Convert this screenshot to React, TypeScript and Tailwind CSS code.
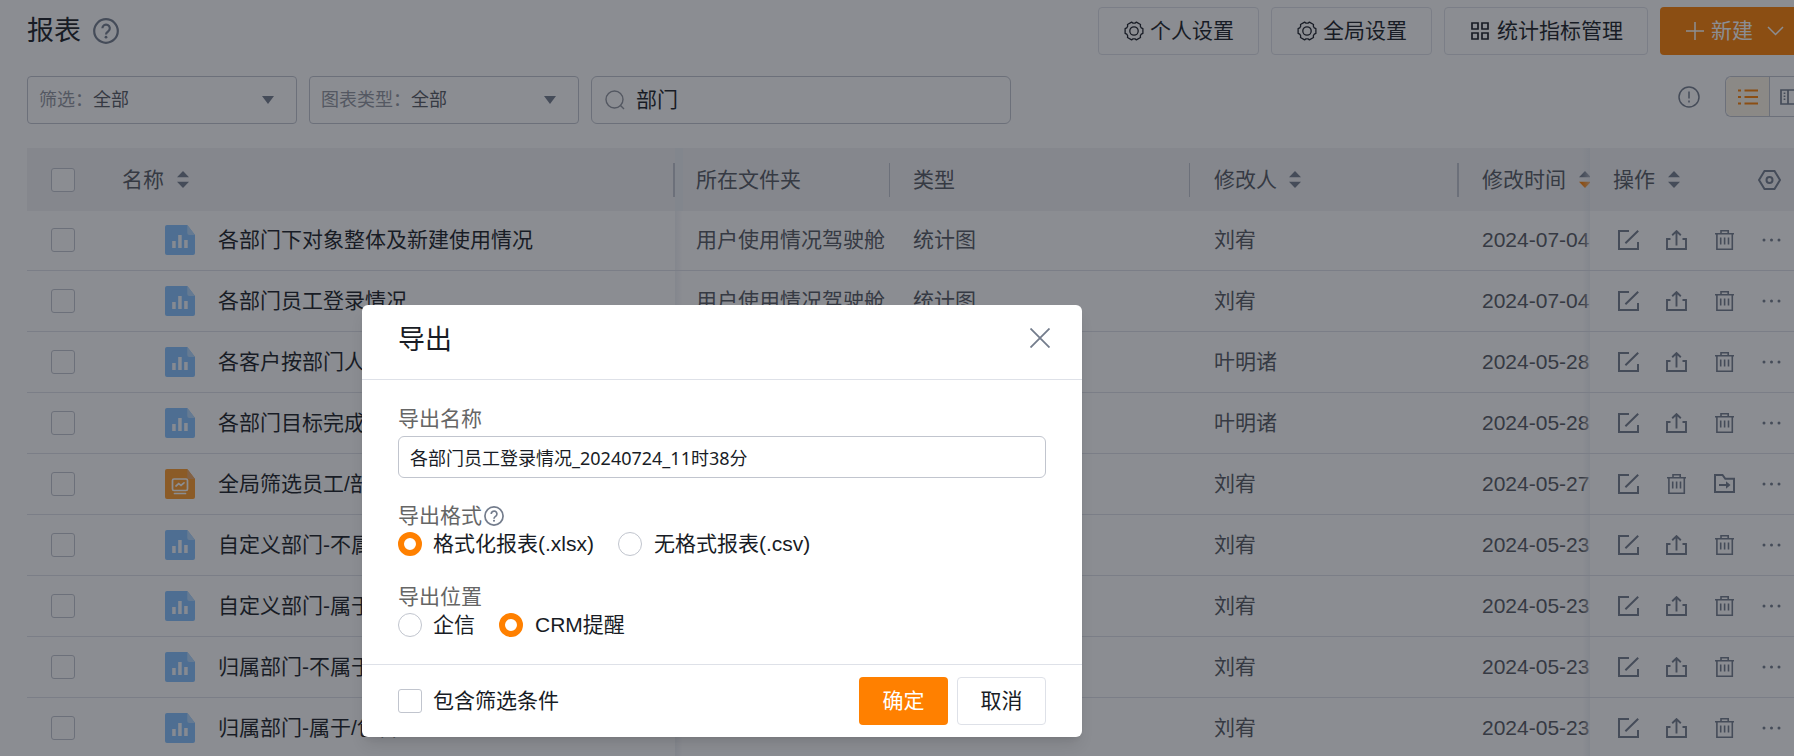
import React, { useState } from 'react';

type Kind = 'chart' | 'board';

interface Report {
    id: number;
    kind: Kind;
    name: string;
    folder: string;
    type: string;
    editor: string;
    date: string;
}

const reports: Report[] = [
    { id: 1, kind: 'chart', name: '各部门下对象整体及新建使用情况', folder: '用户使用情况驾驶舱', type: '统计图', editor: '刘宥', date: '2024-07-04' },
    { id: 2, kind: 'chart', name: '各部门员工登录情况', folder: '用户使用情况驾驶舱', type: '统计图', editor: '刘宥', date: '2024-07-04' },
    { id: 3, kind: 'chart', name: '各客户按部门人员', folder: '', type: '', editor: '叶明诸', date: '2024-05-28' },
    { id: 4, kind: 'chart', name: '各部门目标完成情况', folder: '', type: '', editor: '叶明诸', date: '2024-05-28' },
    { id: 5, kind: 'board', name: '全局筛选员工/部门', folder: '', type: '', editor: '刘宥', date: '2024-05-27' },
    { id: 6, kind: 'chart', name: '自定义部门-不属于', folder: '', type: '', editor: '刘宥', date: '2024-05-23' },
    { id: 7, kind: 'chart', name: '自定义部门-属于', folder: '', type: '', editor: '刘宥', date: '2024-05-23' },
    { id: 8, kind: 'chart', name: '归属部门-不属于', folder: '', type: '', editor: '刘宥', date: '2024-05-23' },
    { id: 9, kind: 'chart', name: '归属部门-属于/包含', folder: '', type: '', editor: '刘宥', date: '2024-05-23' },
];

const checkboxClass = 'block size-6 shrink-0 appearance-none rounded-[3px] border border-[#c1c5ce] bg-white checked:border-[#ff8000] checked:bg-[#ff8000]';
const radioClass = 'size-6 shrink-0 appearance-none rounded-full border border-[#c1c5ce] bg-white checked:border-6 checked:border-[#ff8000]';

/* Iconos */
const HelpIcon: React.FC<{ className: string }> = ({ className }) => (
    <svg viewBox="0 0 26 26" className={className} fill="none" stroke="currentColor" strokeWidth="2.2">
        <circle cx="13" cy="13" r="11.800" />
        <path d="M9.400 10.300a3.700 3.700 0 1 1 6 2.900c-1.500 1.200-2.400 1.700-2.400 3.300" />
        <circle cx="13" cy="19.200" r="1.400" fill="currentColor" stroke="none" />
    </svg>
);

// seis dientes, dos puntos por diente y dos por hueco
const gearPoints = Array.from({ length: 24 }, (_, i) => {
    const tooth = Math.floor(i / 4) * 60;
    const step = i % 4;
    const angle = ((tooth + [-15, 15, 23, 37][step]) * Math.PI) / 180;
    const radius = step < 2 ? 9.2 : 7.9;
    return `${(10 + radius * Math.cos(angle)).toFixed(2)},${(10 + radius * Math.sin(angle)).toFixed(2)}`;
}).join(' ');

const GearIcon = () => (
    <svg width="20" height="20" viewBox="0 0 20 20" fill="none" stroke="currentColor" strokeWidth="1.3" strokeLinejoin="round">
        <polygon points={gearPoints} />
        <circle cx="10" cy="10" r="4.2" />
    </svg>
);

const EditIcon = () => (
    <svg width="21" height="20" viewBox="0 0 21 20" fill="none" stroke="currentColor" strokeWidth="2">
        <path d="M11 1H1v18h19v-7M20.200 .800 7.400 13.300" />
    </svg>
);

const ShareIcon = () => (
    <svg width="21" height="20" viewBox="0 0 21 20" fill="none" stroke="currentColor" strokeWidth="1.900">
        <path d="M4.500 9H1v10h19V9h-3.500M10.500 15.500V1.200M6.200 5.200l4.300-4.100 4.300 4.100" />
    </svg>
);

const TrashIcon = () => (
    <svg width="19" height="20" viewBox="0 0 19 20" fill="none" stroke="currentColor" strokeWidth="1.600">
        <path d="M0 3.700h19M6 3.700V.8h7.200v2.900M1.900 3.700v15.500h15.400V3.700M5.700 7.500v7M9.600 7.500v7M13.500 7.500v7" />
    </svg>
);

const MoveIcon = () => (
    <svg width="21" height="19" viewBox="0 0 21 19" fill="none" stroke="currentColor" strokeWidth="2">
        <path d="M1 1h7.500l2.800 3.800H20V18H1zM5 11h8" />
        <path d="M12 7.200 16.500 11 12 14.800z" fill="currentColor" stroke="none" />
    </svg>
);

const DotsIcon = () => (
    <svg width="20" height="4" viewBox="0 0 20 4" fill="currentColor">
        <circle cx="2" cy="2" r="1.500" />
        <circle cx="9.500" cy="2" r="1.500" />
        <circle cx="17" cy="2" r="1.500" />
    </svg>
);

const SortIcon: React.FC<{ desc?: boolean }> = ({ desc }) => (
    <svg width="12" height="17" viewBox="0 0 12 17" fill="currentColor" className="shrink-0 text-[#737c8c]">
        <path d="M6 0l6 6.200H0z" />
        <path d="M0 10.800h12L6 17z" fill={desc ? '#ff8000' : 'currentColor'} />
    </svg>
);

const FileIcon: React.FC<{ kind: Kind }> = ({ kind }) => (
    <svg width="30" height="30" viewBox="0 0 30 30" className="shrink-0">
        <path d="M2 0h20.300L30 10v18a2 2 0 0 1-2 2H2a2 2 0 0 1-2-2V2a2 2 0 0 1 2-2z" fill={kind === 'chart' ? '#85c1ff' : '#ff9b29'} />
        <path d="M22.300 0 30 10h-5.700a2 2 0 0 1-2-2z" fill={kind === 'chart' ? '#b3d9ff' : '#eda764'} />
        {kind === 'chart' ? (
            <path d="M7.200 16h3.500v7H7.200zM13.200 10h3.500v13h-3.500zM19.200 15h3.500v8h-3.500z" fill="#f4f9ff" />
        ) : (
            <g fill="none" stroke="#fff" strokeWidth="1.700" strokeLinecap="round">
                <rect x="7.500" y="10" width="15" height="11.500" rx="1.500" />
                <path d="M11 17l2.700-2.300 2.300 1.800 3-2.700M9.500 24.500h11" />
            </g>
        )}
    </svg>
);

const IconButton: React.FC<{ label: string; children: React.ReactNode }> = ({ label, children }) => (
    <button aria-label={label} className="flex size-6 items-center justify-center hover:text-[#ff8000]">
        {children}
    </button>
);

const FilterSelect: React.FC<{ label: string }> = ({ label }) => (
    <label className="relative flex h-12 w-[270px] items-center rounded border border-[#c1c5ce] pl-[11px] text-lg text-[#91959e]">
        {label}：
        <select className="flex-1 appearance-none bg-transparent text-[#545861] outline-none">
            <option>全部</option>
        </select>
        <svg width="12" height="8" viewBox="0 0 12 8" fill="#737c8c" className="pointer-events-none absolute right-[22px]">
            <path d="M0 0h12L6 8z" />
        </svg>
    </label>
);

const PageHeader = () => (
    <header className="flex items-center justify-between pl-[27px]">
        <div className="flex items-center gap-3">
            <h1 className="text-[27px] leading-9">报表</h1>
            <button aria-label="帮助" className="text-[#737c8c]">
                <HelpIcon className="size-[26px]" />
            </button>
        </div>
        <div className="flex gap-3 text-[21px]">
            {['个人设置', '全局设置'].map(text => (
                <button key={text} className="flex h-12 items-center gap-[6px] rounded border border-[#dee1e8] pr-6 pl-[25px]">
                    <GearIcon />
                    {text}
                </button>
            ))}
            <button className="flex h-12 items-center gap-2 rounded border border-[#dee1e8] pr-6 pl-[26px]">
                <svg width="18" height="18" viewBox="0 0 18 18" fill="none" stroke="currentColor" strokeWidth="1.700">
                    <path d="M1 1h6v6H1zM11 1h6v6h-6zM1 11h6v6H1zM11 11h6v6h-6z" />
                </svg>
                统计指标管理
            </button>
            <button className="flex h-12 items-center rounded-l bg-[#ff8000] pr-[10px] pl-[26px] text-white">
                <svg width="18" height="18" viewBox="0 0 18 18" stroke="currentColor" strokeWidth="1.500">
                    <path d="M9 0v18M0 9h18" />
                </svg>
                <span className="mr-[14px] ml-[7px]">新建</span>
                <svg width="17" height="10" viewBox="0 0 17 10" fill="none" stroke="currentColor" strokeWidth="1.500">
                    <path d="M1 1l7.500 7.500L16 1" />
                </svg>
            </button>
        </div>
    </header>
);

const Toolbar = () => (
    <div className="mt-[21px] flex items-start gap-3 pl-[27px]">
        <FilterSelect label="筛选" />
        <FilterSelect label="图表类型" />
        <label className="flex h-12 w-[420px] items-center gap-[11px] rounded-md border border-[#c1c5ce] px-[13px]">
            <svg width="20" height="20" viewBox="0 0 20 20" fill="none" stroke="#91959e" strokeWidth="1.400" className="shrink-0">
                <circle cx="9.500" cy="9.500" r="8.500" />
                <path d="M15 15l4 4" />
            </svg>
            <input aria-label="搜索" defaultValue="部门" className="min-w-0 flex-1 bg-transparent text-[21px] outline-none" />
        </label>
        <div className="ml-auto flex items-center gap-[25px]">
            <button aria-label="提示" className="text-[#737c8c]">
                <svg width="22" height="22" viewBox="0 0 22 22" fill="none" stroke="currentColor" strokeWidth="1.500">
                    <circle cx="11" cy="11" r="10" />
                    <path d="M11 5.500v7M11 14.500v2" />
                </svg>
            </button>
            <div className="flex h-[41px] rounded-l-md border border-r-0 border-[#c1c5ce]">
                <button aria-label="列表" className="flex w-[43px] items-center justify-center rounded-l-md bg-[#fff7e6] text-[#ff8000]">
                    <svg width="20" height="16" viewBox="0 0 20 16" fill="none" stroke="currentColor" strokeWidth="1.800">
                        <path d="M0 1.500h3M6.500 1.500H20M0 8h3M6.500 8H20M0 14.500h3M6.500 14.500H20" />
                    </svg>
                </button>
                <button aria-label="分栏" className="flex w-[25px] items-center justify-end overflow-hidden border-l border-[#c1c5ce] text-[#737c8c]">
                    <svg width="14" height="16" viewBox="0 0 14 16" fill="none" stroke="currentColor" strokeWidth="1.700">
                        <path d="M14 1H1v14h13M8 1v14" />
                        <path d="M4.500 3.500v9" strokeDasharray="1.500 1.500" />
                    </svg>
                </button>
            </div>
        </div>
    </div>
);

const ReportTable = () => (
    <div className="mt-6 pl-[27px]">
        <table className="w-full table-fixed text-left text-[21px] leading-[30px] whitespace-nowrap text-[#545861]">
            <colgroup>
                <col className="w-[74px]" />
                <col className="w-[574px]" />
                <col className="w-[215px]" />
                <col />
                <col className="w-[269px]" />
                <col className="w-[131px]" />
                <col className="w-[204px]" />
            </colgroup>
            <thead>
                <tr className="h-[63px] bg-[#f2f3f5]">
                    <th className="pl-6"><input type="checkbox" aria-label="全选" className={checkboxClass} /></th>
                    <th className="p-0 font-normal">
                        <div className="flex h-[34px] items-center gap-[13px] border-r-2 border-[#c1c5ce] pl-[21px]">名称<SortIcon /></div>
                    </th>
                    <th className="relative p-0 font-normal before:absolute before:inset-y-0 before:left-0 before:w-2 before:bg-[#edf0f5]">
                        <div className="flex h-[34px] items-center border-r border-[#c1c5ce] pl-[21px]">所在文件夹</div>
                    </th>
                    <th className="p-0 font-normal">
                        <div className="flex h-[34px] items-center border-r border-[#c1c5ce] pl-[23px]">类型</div>
                    </th>
                    <th className="p-0 font-normal">
                        <div className="flex h-[34px] items-center gap-3 border-r-2 border-[#c1c5ce] pl-6">修改人<SortIcon /></div>
                    </th>
                    <th className="relative overflow-hidden p-0 font-normal after:absolute after:inset-y-0 after:right-0 after:w-2 after:bg-linear-to-r after:from-transparent after:to-[#dfe3ea]/50">
                        <div className="flex h-[34px] items-center gap-[13px] pl-[23px]">修改时间<SortIcon desc /></div>
                    </th>
                    <th className="p-0 font-normal">
                        <div className="flex items-center gap-[13px] pr-[13px] pl-[23px]">
                            操作<SortIcon />
                            <button aria-label="列设置" className="ml-auto text-[#737c8c]">
                                <svg width="23" height="20" viewBox="0 0 23 20" fill="none" stroke="currentColor" strokeWidth="2">
                                    <path d="M6.500 1h10L22 10l-5.500 9h-10L1 10z" />
                                    <circle cx="11.500" cy="10" r="3" />
                                </svg>
                            </button>
                        </div>
                    </th>
                </tr>
            </thead>
            <tbody>
                {reports.map(r => (
                    <tr key={r.id} className="h-[61px] border-b border-[#dee1e8] first:h-[59px]">
                        <td className="pl-6"><input type="checkbox" aria-label={r.name} className={checkboxClass} /></td>
                        <td className="p-0">
                            <div className="flex items-center gap-[23px] pl-16 text-[#181c25]">
                                <FileIcon kind={r.kind} />
                                {r.name}
                            </div>
                        </td>
                        <td className="relative pl-[21px] before:absolute before:inset-y-0 before:left-0 before:w-2 before:bg-linear-to-r before:from-[#eff1f5] before:to-white">{r.folder}</td>
                        <td className="pl-[23px]">{r.type}</td>
                        <td className="pl-6">{r.editor}</td>
                        <td className="relative overflow-hidden pl-[23px] after:absolute after:inset-y-0 after:right-0 after:w-2 after:bg-linear-to-r after:from-transparent after:to-[#e6e9ef]/60">{r.date}</td>
                        <td className="p-0">
                            <div className="flex gap-6 pl-[26px] text-[#737c8c]">
                                <IconButton label="编辑"><EditIcon /></IconButton>
                                {r.kind === 'chart' && <IconButton label="导出"><ShareIcon /></IconButton>}
                                <IconButton label="删除"><TrashIcon /></IconButton>
                                {r.kind === 'board' && <IconButton label="移动"><MoveIcon /></IconButton>}
                                <IconButton label="更多"><DotsIcon /></IconButton>
                            </div>
                        </td>
                    </tr>
                ))}
            </tbody>
        </table>
    </div>
);

const ExportDialog = () => {
    const [format, setFormat] = useState('xlsx');
    const [target, setTarget] = useState('crm');

    return (
        <div role="dialog" aria-labelledby="export-title" className="absolute top-[305px] left-[362px] w-[720px] rounded-md bg-white shadow-lg">
            <div className="flex items-start justify-between border-b border-[#dee1e8] px-9 pt-[17px] pb-[21px]">
                <h2 id="export-title" className="text-[27px] leading-9">导出</h2>
                <button aria-label="关闭" className="mt-[6px] -mr-1 text-[#737c8c]">
                    <svg width="20" height="20" viewBox="0 0 20 20" stroke="currentColor" strokeWidth="1.800">
                        <path d="M.5.500l19 19M19.500.500l-19 19" />
                    </svg>
                </button>
            </div>

            <div className="px-9 py-[25px] text-[21px] leading-7">
                <label htmlFor="export-name" className="block text-[#666]">导出名称</label>
                <input
                    id="export-name"
                    defaultValue="各部门员工登录情况_20240724_11时38分"
                    className="mt-[3px] block h-[42px] w-full rounded-md border border-[#c1c5ce] px-[11px] font-['Noto_Sans','Noto_Sans_CJK_SC',sans-serif] text-lg outline-none"
                />

                <fieldset className="mt-6">
                    <legend className="flex items-center text-[#666]">
                        导出格式
                        <HelpIcon className="ml-0.5 size-5 text-[#737c8c]" />
                    </legend>
                    <div className="flex gap-6 pb-[25px]">
                        <label className="flex items-center gap-[11px]">
                            <input type="radio" name="format" className={radioClass} checked={format === 'xlsx'} onChange={() => setFormat('xlsx')} />
                            格式化报表(.xlsx)
                        </label>
                        <label className="flex items-center gap-3">
                            <input type="radio" name="format" className={radioClass} checked={format === 'csv'} onChange={() => setFormat('csv')} />
                            无格式报表(.csv)
                        </label>
                    </div>
                </fieldset>

                <fieldset>
                    <legend className="text-[#666]">导出位置</legend>
                    <div className="flex gap-6">
                        <label className="flex items-center gap-[11px]">
                            <input type="radio" name="target" className={radioClass} checked={target === 'qixin'} onChange={() => setTarget('qixin')} />
                            企信
                        </label>
                        <label className="flex items-center gap-3">
                            <input type="radio" name="target" className={radioClass} checked={target === 'crm'} onChange={() => setTarget('crm')} />
                            CRM提醒
                        </label>
                    </div>
                </fieldset>
            </div>

            <div className="flex items-center gap-[9px] border-t border-[#dee1e8] px-9 py-3 text-[21px]">
                <label className="mr-auto flex items-center gap-[11px]">
                    <input type="checkbox" className={checkboxClass} />
                    包含筛选条件
                </label>
                <button className="h-12 w-[89px] rounded bg-[#ff8000] text-white">确定</button>
                <button className="h-12 w-[89px] rounded border border-[#dee1e8]">取消</button>
            </div>
        </div>
    );
};

const App: React.FC = () => (
    <div className="relative h-screen overflow-hidden bg-white font-['Liberation_Sans','Noto_Sans_CJK_SC',sans-serif] text-[#181c25]">
        <main className="pt-[7px]">
            <PageHeader />
            <Toolbar />
            <ReportTable />
        </main>
        <div className="absolute inset-0 bg-[#181c25]/50" />
        <ExportDialog />
    </div>
);

export default App;
